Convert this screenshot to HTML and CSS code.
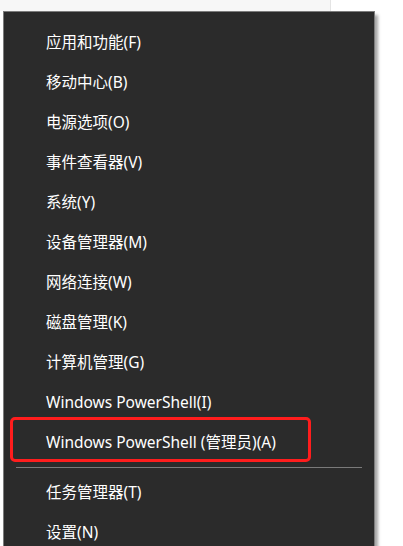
FILE: index.html
```html
<!DOCTYPE html>
<html lang="zh-CN">
<head>
  <meta charset="UTF-8">
  <meta name="viewport" content="width=device-width, initial-scale=1.0">
  <title>Win+X 菜单</title>
  <link rel="stylesheet" href="styles.css">
</head>
<body>
  <div class="desktop">
    <div class="panel"></div>
    <ul class="menu">
      <li class="item">应用和功能(F)</li>
      <li class="item">移动中心(B)</li>
      <li class="item">电源选项(O)</li>
      <li class="item">事件查看器(V)</li>
      <li class="item">系统(Y)</li>
      <li class="item">设备管理器(M)</li>
      <li class="item">网络连接(W)</li>
      <li class="item">磁盘管理(K)</li>
      <li class="item">计算机管理(G)</li>
      <li class="item">Windows PowerShell(I)</li>
      <li class="item marked">Windows PowerShell (管理员)(A)</li>
      <li class="separator"></li>
      <li class="item">任务管理器(T)</li>
      <li class="item">设置(N)</li>
    </ul>
  </div>
</body>
</html>
```

FILE: styles.css
```css
body {
  margin: 0;
  padding: 0;
  background-color: #fff;
  font-family: "Noto Sans", "Noto Sans CJK SC", sans-serif;
  overflow: hidden;
}

.desktop {
  height: 546px;
  overflow: hidden;
}

.panel {
  width: 330px;
  height: 11px;
  background-color: #f7f7f7;
  border-right: 1px solid #e4e4e4;
}

.menu {
  list-style-type: none;
  margin: 0 0 0 3px;
  padding: 11px 0 0 0;
  width: 370px;
  height: 600px;
  background-color: #2b2b2b;
  border: 1px solid #7c7c7c;
  border-bottom: none;
  box-shadow: 3px 4px 3px rgba(0, 0, 0, 0.35);
}

.item {
  position: relative;
  height: 40px;
  line-height: 39px;
  padding-left: 42px;
  color: #fff;
  font-size: 15.5px;
  white-space: nowrap;
}

.marked::after {
  content: "";
  position: absolute;
  left: 6px;
  top: -6px;
  width: 295px;
  height: 39px;
  border: 3px solid #ff1d1d;
  border-radius: 5px;
}

.separator {
  height: 1px;
  margin: 4px 12px 5px 12px;
  background-color: #7a7a7a;
}
```
